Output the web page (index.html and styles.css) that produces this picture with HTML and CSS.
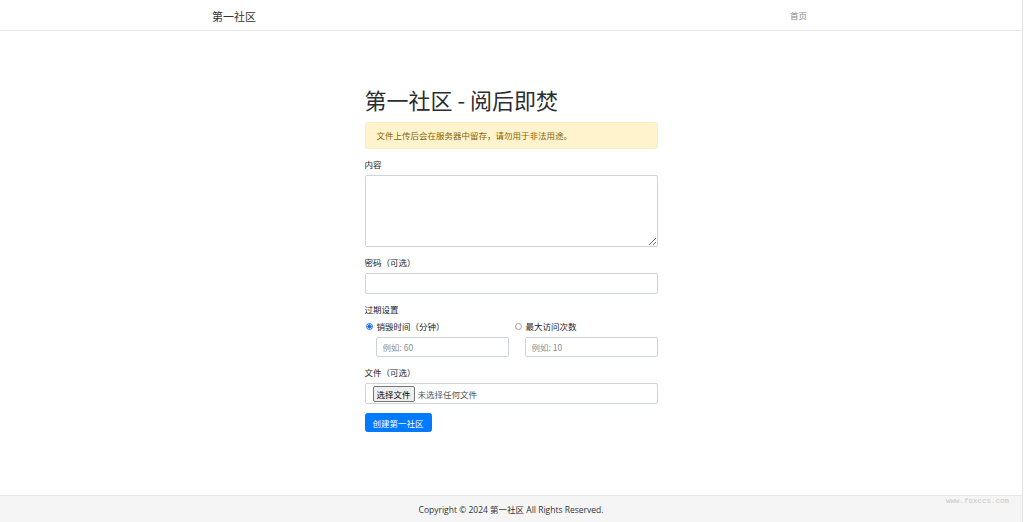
FILE: index.html
```html
<!DOCTYPE html>
<html lang="zh-CN">
<head>
<meta charset="utf-8">
<title>第一社区 - 阅后即焚</title>
<link rel="stylesheet" href="styles.css">
</head>
<body>
<header class="navbar">
  <div class="nav-inner">
    <span class="brand">第一社区</span>
    <a class="nav-link" href="#">首页</a>
  </div>
</header>
<main class="main">
  <div class="form-col">
    <h1 class="title">第一社区 - 阅后即焚</h1>
    <div class="alert">文件上传后会在服务器中留存，请勿用于非法用途。</div>
    <div class="group">
      <label class="label">内容</label>
      <textarea class="textarea"></textarea>
    </div>
    <div class="group">
      <label class="label">密码（可选）</label>
      <input class="input" type="password">
    </div>
    <div class="group">
      <label class="label">过期设置</label>
      <div class="expire-grid">
        <div class="expire-col">
          <label class="radio-row"><input class="radio" type="radio" name="exp" checked><span>销毁时间（分钟）</span></label>
          <input class="input small" type="text" placeholder="例如: 60">
        </div>
        <div class="expire-col">
          <label class="radio-row"><input class="radio" type="radio" name="exp"><span>最大访问次数</span></label>
          <input class="input small" type="text" placeholder="例如: 10">
        </div>
      </div>
    </div>
    <div class="group">
      <label class="label">文件（可选）</label>
      <div class="file-box"><button class="file-btn" type="button">选择文件</button><span class="file-name">未选择任何文件</span></div>
    </div>
    <button class="submit" type="button">创建第一社区</button>
  </div>
</main>
<footer class="footer">
  <span class="copyright">Copyright © 2024 第一社区 All Rights Reserved.</span>
  <span class="watermark">www.foxccs.com</span>
</footer>
</body>
</html>
```
FILE: styles.css
```css
* { box-sizing: border-box; }
html { background: #fff; }
body {
  margin: 0;
  width: 1023px;
  height: 522px;
  border-right: 1px solid #e4e4e4;
  display: flex;
  flex-direction: column;
  font-family: "Noto Sans CJK SC", "Noto Sans", sans-serif;
  color: #212529;
  background: #fff;
}
.navbar {
  height: 31px;
  border-bottom: 1px solid #e6e6e6;
  flex: none;
}
.nav-inner {
  width: 624px;
  margin: 0 auto;
  height: 30px;
  padding: 0 16px 0 13px;
  display: flex;
  align-items: center;
  justify-content: space-between;
}
.brand {
  font-size: 11px;
  line-height: 14px;
  color: #333;
  margin-top: 1px;
}
.nav-link {
  font-size: 8.5px;
  color: #888;
  text-decoration: none;
}
.main {
  flex: 1;
  padding-top: 55px;
}
.form-col {
  width: 293px;
  margin: 0 auto;
  display: flex;
  flex-direction: column;
  align-items: flex-start;
}
.title {
  margin: 0 0 10px;
  font-size: 22px;
  line-height: 26px;
  font-weight: 400;
  color: #2a2e32;
}
.alert {
  width: 100%;
  height: 27px;
  padding: 0 11px;
  line-height: 25px;
  font-size: 8.5px;
  color: #856404;
  background: #fff3cd;
  border: 1px solid #ffeeba;
  border-radius: 2px;
  margin-bottom: 9px;
}
.group {
  width: 100%;
  display: flex;
  flex-direction: column;
  margin-bottom: 9px;
}
.label {
  font-size: 8.5px;
  line-height: 12px;
  margin-bottom: 5px;
  color: #212529;
}
.textarea {
  width: 100%;
  height: 72px;
  border: 1px solid #ced4da;
  border-radius: 2px;
  margin: 0;
  display: block;
  font-family: inherit;
}
.input {
  width: 100%;
  height: 21px;
  border: 1px solid #ced4da;
  border-radius: 2px;
  margin: 0;
  padding: 0 6px;
  font-family: inherit;
  font-size: 8.5px;
  color: #495057;
  display: block;
}
.input.small { height: 20px; }
.input::placeholder { color: #8a8f94; }
.expire-grid {
  display: grid;
  grid-template-columns: 1fr 1fr;
  column-gap: 5px;
}
.expire-col {
  display: flex;
  flex-direction: column;
  gap: 5px;
}
.expire-col .input { margin-left: 11px; width: calc(100% - 11px); }
.radio-row {
  display: flex;
  align-items: center;
  font-size: 8.5px;
  line-height: 12px;
  height: 12px;
}
.radio {
  appearance: none;
  -webkit-appearance: none;
  width: 7px;
  height: 7px;
  margin: 0 4px 0 1px;
  border: 1px solid #a0a0a0;
  border-radius: 50%;
  background: #fff;
  flex: none;
}
.radio:checked {
  border-color: #1a73e8;
  background: radial-gradient(circle, #1a73e8 0 55%, #fff 60%);
}
.file-box {
  width: 100%;
  height: 21px;
  border: 1px solid #ced4da;
  border-radius: 2px;
  display: flex;
  align-items: center;
  padding-left: 7px;
}
.file-btn {
  height: 16px;
  margin: 0;
  padding: 0 3px;
  font-family: inherit;
  font-size: 8.5px;
  line-height: 14px;
  color: #000;
  background: #efefef;
  border: 1px solid #767676;
  border-radius: 2px;
}
.file-name {
  font-size: 8.5px;
  margin-left: 3px;
  color: #555;
}
.submit {
  margin: 0;
  height: 19px;
  padding: 0 7px;
  font-family: inherit;
  font-size: 8.5px;
  color: #fff;
  background: #007bff;
  border: 1px solid #007bff;
  border-radius: 2.5px;
}
.footer {
  position: relative;
  flex: none;
  height: 27px;
  border-top: 1px solid #e6e6e6;
  background: #f5f5f5;
  display: flex;
  align-items: center;
  justify-content: center;
}
.copyright {
  font-family: "Open Sans", "Noto Sans CJK SC", sans-serif;
  font-size: 8.5px;
  color: #333;
}
.watermark {
  position: absolute;
  right: 13px;
  top: 1px;
  font-family: "Liberation Mono", monospace;
  font-size: 7.5px;
  color: #c8c8c8;
}
```
